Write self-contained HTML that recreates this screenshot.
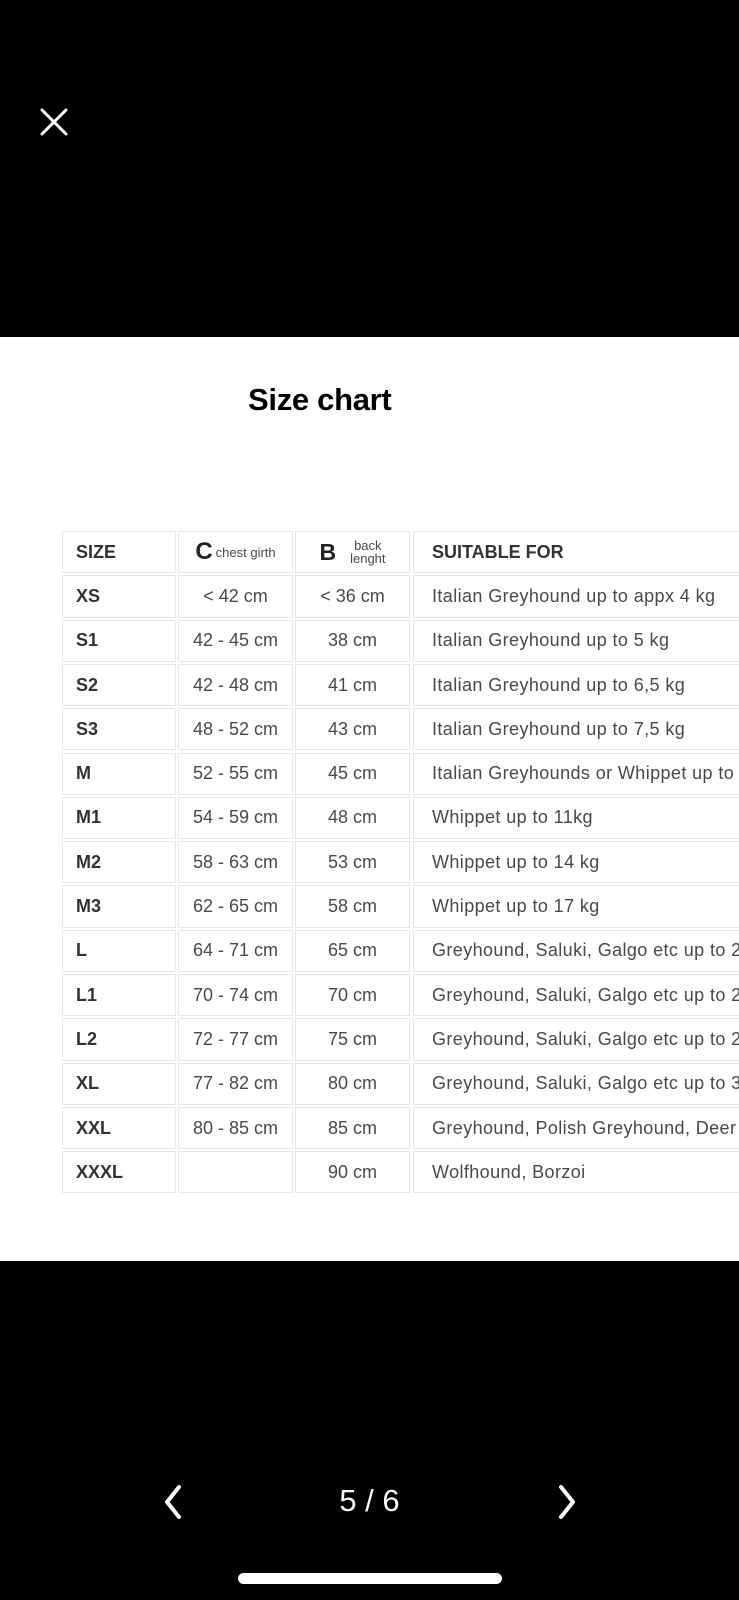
<!DOCTYPE html>
<html><head><meta charset="utf-8"><style>
*{margin:0;padding:0;box-sizing:border-box}
body{width:739px;height:1600px;background:#000;position:relative;overflow:hidden;font-family:"Liberation Sans",sans-serif}
.white{position:absolute;left:0;top:337px;width:739px;height:924px;background:#fff}
.title{position:absolute;left:248px;top:382px;font-size:31px;font-weight:bold;color:#000;letter-spacing:-0.3px}
.tbl{position:absolute;left:62px;top:530px;width:680px}
.row{position:absolute;left:0;height:44.3px;width:680px}
.c{position:absolute;top:1px;bottom:1px;border:1px solid #e6e6e6;color:#4a4a4a;font-size:18px;letter-spacing:0.4px;display:flex;align-items:center;white-space:nowrap;overflow:hidden}
.c1{left:0;width:114px;padding-left:13px;font-weight:bold;color:#333;letter-spacing:0}
.c2{left:116px;width:115px;justify-content:center;letter-spacing:0}
.c3{left:233px;width:115px;justify-content:center;letter-spacing:0}
.c4{left:351px;width:340px;padding-left:18px}
.hd{font-weight:bold;color:#333;letter-spacing:0}
.x{position:absolute;left:40px;top:108px}
.nav{position:absolute;color:#fff}
.pg{position:absolute;left:0;width:739px;top:1483px;text-align:center;color:#fff;font-size:31px;font-family:"Liberation Sans",sans-serif}
.bar{position:absolute;left:238px;top:1573px;width:264px;height:11px;border-radius:6px;background:#fff}
</style></head><body>
<svg class="x" width="28" height="28" viewBox="0 0 28 28"><path d="M2 2L26 26M26 2L2 26" stroke="#fff" stroke-width="3" stroke-linecap="round"/></svg>
<div class="white"></div>
<div class="title">Size chart</div>
<div class="tbl">
<div class="row" style="top:0"><div class="c c1 hd">SIZE</div><div class="c c2" style="font-size:13px"><b style="font-size:24px;color:#222;margin-right:3px">C</b>chest girth</div><div class="c c3"><b style="font-size:23px;color:#222;margin-right:14px">B</b><span style="font-size:13px;line-height:13px;text-align:center">back<br>lenght</span></div><div class="c c4 hd">SUITABLE FOR</div></div>
<div class="row" style="top:44.3px"><div class="c c1">XS</div><div class="c c2">&lt; 42 cm</div><div class="c c3">&lt; 36 cm</div><div class="c c4">Italian Greyhound up to appx 4 kg</div></div>
<div class="row" style="top:88.6px"><div class="c c1">S1</div><div class="c c2">42 - 45 cm</div><div class="c c3">38 cm</div><div class="c c4">Italian Greyhound up to 5 kg</div></div>
<div class="row" style="top:132.9px"><div class="c c1">S2</div><div class="c c2">42 - 48 cm</div><div class="c c3">41 cm</div><div class="c c4">Italian Greyhound up to 6,5 kg</div></div>
<div class="row" style="top:177.2px"><div class="c c1">S3</div><div class="c c2">48 - 52 cm</div><div class="c c3">43 cm</div><div class="c c4">Italian Greyhound up to 7,5 kg</div></div>
<div class="row" style="top:221.5px"><div class="c c1">M</div><div class="c c2">52 - 55 cm</div><div class="c c3">45 cm</div><div class="c c4">Italian Greyhounds or Whippet up to</div></div>
<div class="row" style="top:265.8px"><div class="c c1">M1</div><div class="c c2">54 - 59 cm</div><div class="c c3">48 cm</div><div class="c c4">Whippet up to 11kg</div></div>
<div class="row" style="top:310.1px"><div class="c c1">M2</div><div class="c c2">58 - 63 cm</div><div class="c c3">53 cm</div><div class="c c4">Whippet up to 14 kg</div></div>
<div class="row" style="top:354.4px"><div class="c c1">M3</div><div class="c c2">62 - 65 cm</div><div class="c c3">58 cm</div><div class="c c4">Whippet up to 17 kg</div></div>
<div class="row" style="top:398.7px"><div class="c c1">L</div><div class="c c2">64 - 71 cm</div><div class="c c3">65 cm</div><div class="c c4">Greyhound, Saluki, Galgo etc up to 2</div></div>
<div class="row" style="top:443px"><div class="c c1">L1</div><div class="c c2">70 - 74 cm</div><div class="c c3">70 cm</div><div class="c c4">Greyhound, Saluki, Galgo etc up to 2</div></div>
<div class="row" style="top:487.3px"><div class="c c1">L2</div><div class="c c2">72 - 77 cm</div><div class="c c3">75 cm</div><div class="c c4">Greyhound, Saluki, Galgo etc up to 2</div></div>
<div class="row" style="top:531.6px"><div class="c c1">XL</div><div class="c c2">77 - 82 cm</div><div class="c c3">80 cm</div><div class="c c4">Greyhound, Saluki, Galgo etc up to 3</div></div>
<div class="row" style="top:575.9px"><div class="c c1">XXL</div><div class="c c2">80 - 85 cm</div><div class="c c3">85 cm</div><div class="c c4">Greyhound, Polish Greyhound, Deer</div></div>
<div class="row" style="top:620.2px"><div class="c c1">XXXL</div><div class="c c2"></div><div class="c c3">90 cm</div><div class="c c4">Wolfhound, Borzoi</div></div>
</div>
<div style="position:absolute;left:739px;top:337px;width:10px;height:924px;background:#000"></div>
<svg class="nav" style="left:162px;top:1484px" width="22" height="36" viewBox="0 0 22 36"><path d="M17 3L5 18L17 33" stroke="#fff" stroke-width="4" fill="none" stroke-linecap="round" stroke-linejoin="round"/></svg>
<div class="pg">5 / 6</div>
<svg class="nav" style="left:556px;top:1484px" width="22" height="36" viewBox="0 0 22 36"><path d="M5 3L17 18L5 33" stroke="#fff" stroke-width="4" fill="none" stroke-linecap="round" stroke-linejoin="round"/></svg>
<div class="bar"></div>
</body></html>
